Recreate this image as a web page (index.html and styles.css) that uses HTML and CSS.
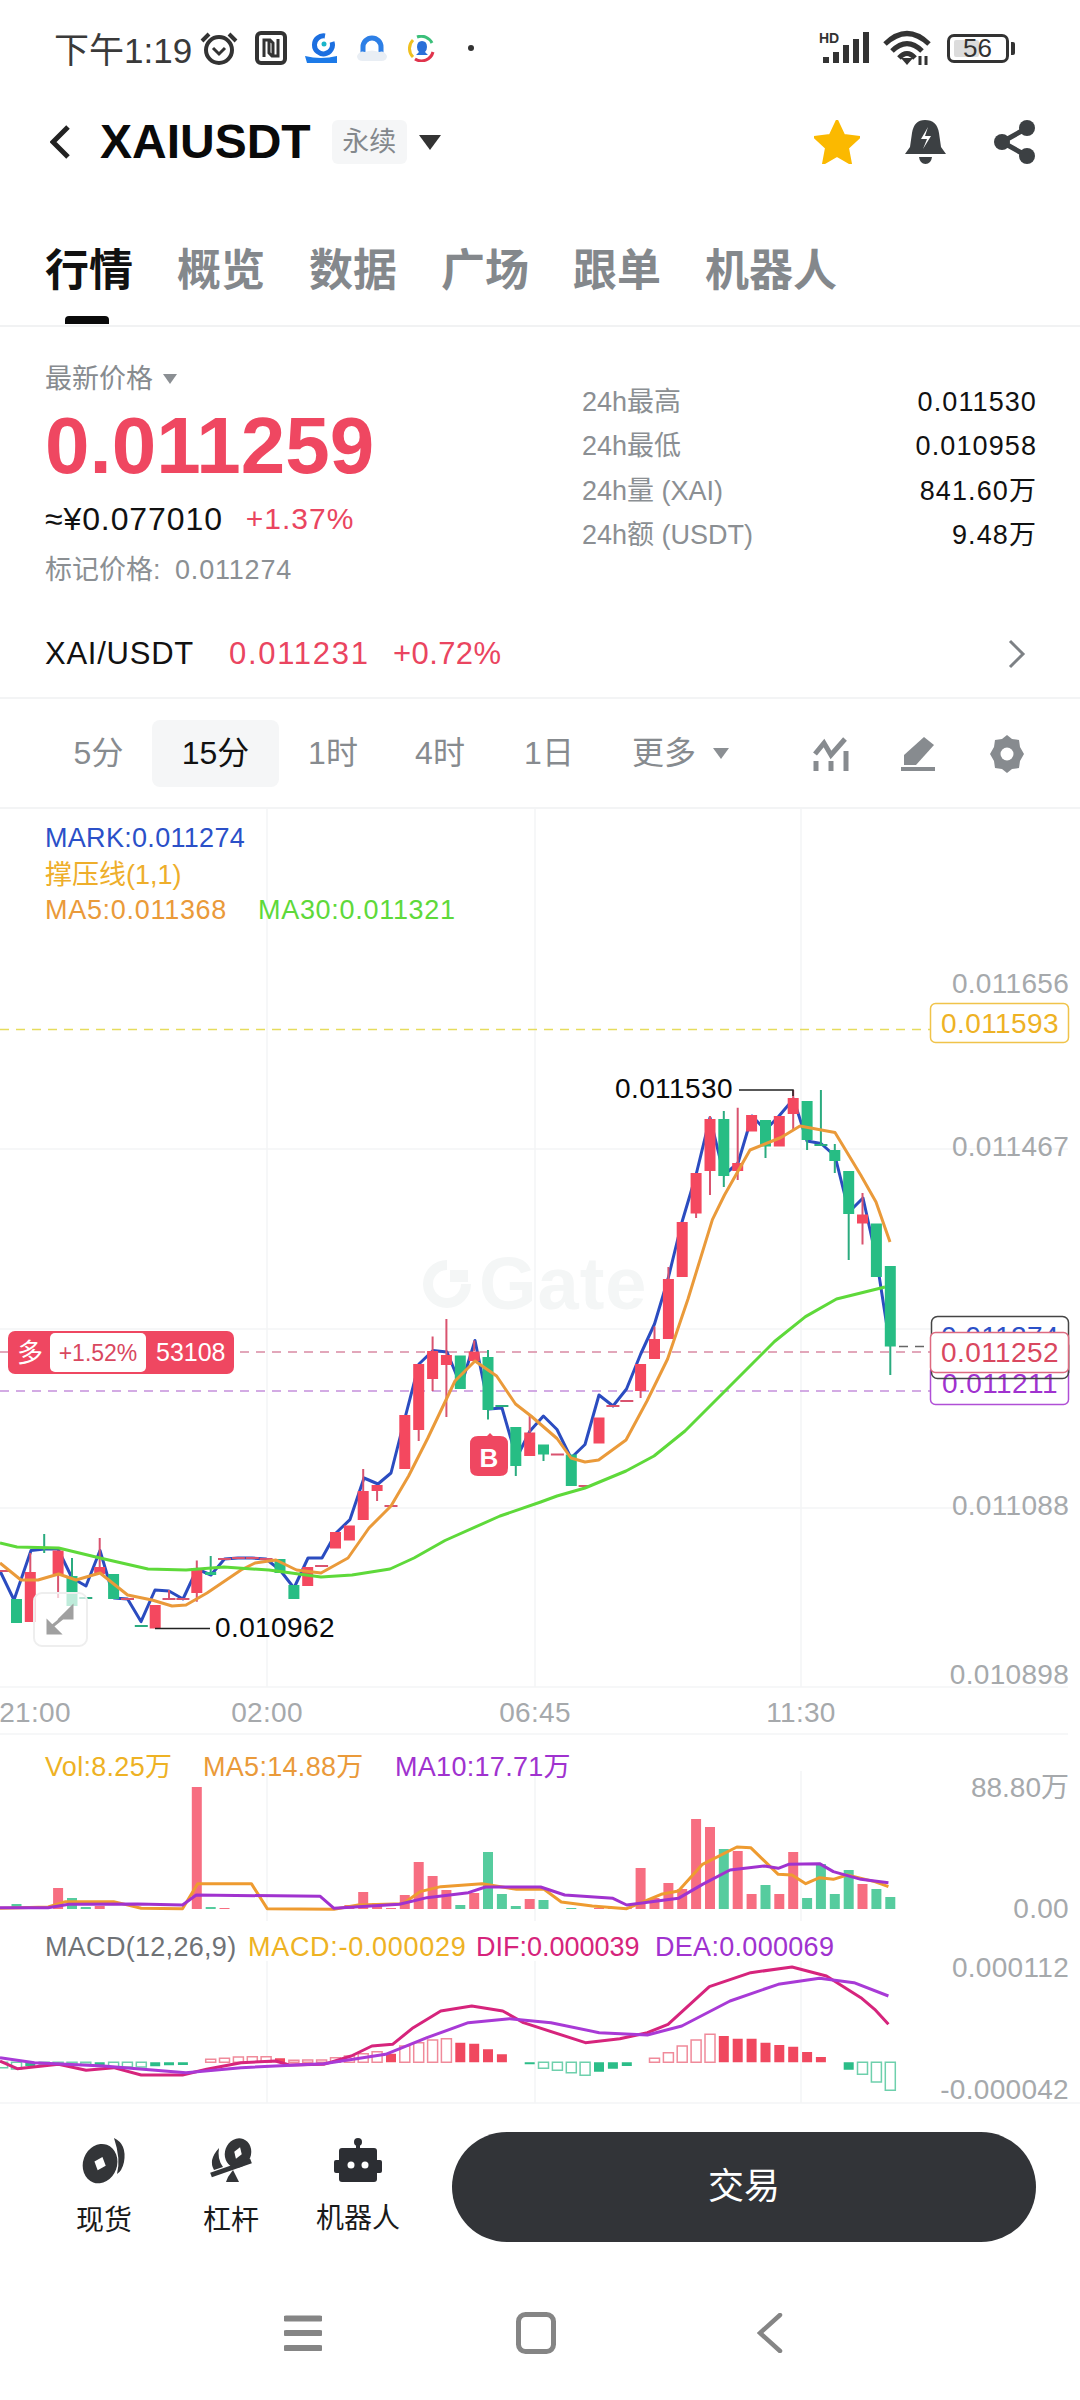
FILE: index.html
```html
<!DOCTYPE html>
<html lang="zh">
<head>
<meta charset="utf-8">
<title>XAIUSDT</title>
<link rel="stylesheet" href="styles.css">
</head>
<body>
<div class="page">
  <div class="status">
    <span class="time">下午1:19</span>
    <svg class="st-ic" viewBox="0 0 38 34" width="38" height="34"><circle cx="19" cy="19" r="13" class="ln4"/><path d="M2 10 9 3M36 10 29 3" class="ln4"/><path d="M13 17l6 6 6-6" class="ln3"/></svg>
    <svg class="st-ic nfc" viewBox="0 0 32 34" width="32" height="34"><rect x="2" y="2" width="28" height="30" rx="4" class="ln4"/><path d="M9 26V9h6l3 3v12M23 8v17h-6l-3-3V10" class="ln3"/></svg>
    <svg class="st-ic app1" viewBox="0 0 34 31" width="34" height="31"><path d="M21 3a9 9 0 1 0 7 6" fill="none" stroke="#1c6fe0" stroke-width="5"/><circle cx="20" cy="11" r="2.500" fill="#19b5c9"/><path d="M1 23q16 4 32 0v7H3z" fill="#1c7ae8"/></svg>
    <svg class="st-ic app2" viewBox="0 0 32 28" width="32" height="28"><path d="M7 19V13a9 9 0 0 1 18 0v6" fill="none" stroke="#2d7fe6" stroke-width="5"/><path d="M1 22q3-6 8-4 7-3 14 0 5-2 8 4 0 5-6 5H7q-6 0-6-5z" fill="#e9eef4"/></svg>
    <svg class="st-ic app3" viewBox="0 0 28 27" width="28" height="27"><path d="M5 22A12 12 0 0 1 5 5" fill="none" stroke="#f0c020" stroke-width="3"/><path d="M9 2a12 12 0 0 1 15 6" fill="none" stroke="#3bbf7a" stroke-width="3"/><path d="M25 17a12 12 0 0 1-18 7" fill="none" stroke="#e0344c" stroke-width="3"/><path d="M14 6q5 0 5 6 0 3-2 5l3 3H8l3-3q-2-2-2-5 0-6 5-6z" fill="#2a6fd8"/></svg>
    <span class="st-dot"></span>
    <span class="st-right">
      <svg viewBox="0 0 54 34" width="54" height="34"><text x="0" y="12" class="hd">HD</text><path d="M7 32v-6M17 32V21M27 32V14M37 32V8M47 32V1" class="sig"/></svg>
      <svg class="wifi" viewBox="0 0 48 36" width="48" height="36"><path d="M2 14Q24-7 46 14M9 21Q24 6 39 21M16 28Q24 19 32 28" class="wf"/><path d="M18 28h12l-6 7z" fill="#333"/><path d="M37 26v9M43 26v9" stroke="#333" stroke-width="3"/></svg>
      <span class="batt"><span class="batt-fill"></span><span class="batt-num">56</span></span><span class="batt-tip"></span>
    </span>
  </div>

  <div class="header">
    <svg class="back" viewBox="0 0 21 34" width="21" height="34"><path d="M18 2 3 17l15 15" fill="none" stroke="#222" stroke-width="5"/></svg>
    <span class="sym">XAIUSDT</span>
    <span class="badge">永续</span>
    <span class="caret"></span>
    <span class="hd-icons">
      <svg viewBox="0 0 46 44" width="46" height="44"><path d="M23 0l7 15 16 2-12 11 3 16-14-8-14 8 3-16L0 17l16-2z" fill="#fbb900" stroke="#fbb900" stroke-linejoin="round" stroke-width="2"/></svg>
      <svg viewBox="0 0 41 44" width="41" height="44"><path d="M20 0q12 0 14 13l2 14 5 7H0l5-7 2-14Q9 0 20 0z" fill="#3c4043"/><path d="M14 37h13q-1 7-6.500 7T14 37z" fill="#3c4043"/><path d="M23 7l-7 12h6l-4 10 8-13h-6z" fill="#fff"/></svg>
      <svg viewBox="0 0 41 44" width="41" height="44"><path d="M33 8 8 22l25 14" fill="none" stroke="#3c4043" stroke-width="5"/><circle cx="33" cy="8" r="8" fill="#3c4043"/><circle cx="8" cy="22" r="8" fill="#3c4043"/><circle cx="33" cy="36" r="8" fill="#3c4043"/></svg>
    </span>
  </div>

  <div class="tabs">
    <span class="tab on">行情</span><span class="tab">概览</span><span class="tab">数据</span><span class="tab">广场</span><span class="tab">跟单</span><span class="tab">机器人</span>
  </div>

  <div class="price">
    <div class="p-left">
      <div class="p-label">最新价格<span class="mini-caret"></span></div>
      <div class="p-big">0.011259</div>
      <div class="p-cny"><span class="cny">≈¥0.077010</span><span class="red chg">+1.37%</span></div>
      <div class="p-mark">标记价格: <span class="num">0.011274</span></div>
    </div>
    <div class="p-right">
      <div class="kv"><span>24h最高</span><b>0.011530</b></div>
      <div class="kv"><span>24h最低</span><b>0.010958</b></div>
      <div class="kv"><span>24h量 (XAI)</span><b>841.60万</b></div>
      <div class="kv"><span>24h额 (USDT)</span><b>9.48万</b></div>
    </div>
  </div>

  <div class="spot">
    <span class="spot-name">XAI/USDT</span><span class="red spot-p">0.011231</span><span class="red spot-c">+0.72%</span>
    <svg class="spot-go" viewBox="0 0 18 30" width="18" height="30"><path d="M2 2l13 13L2 28" fill="none" stroke="#7d8185" stroke-width="3"/></svg>
  </div>

  <div class="frames">
    <span class="fr">5分</span><span class="fr sel">15分</span><span class="fr">1时</span><span class="fr">4时</span><span class="fr fr-day">1日</span>
    <span class="fr more">更多<span class="mini-caret big"></span></span>
    <span class="fr-icons">
      <svg viewBox="0 0 36 34" width="36" height="34"><path d="M2 17 11 6l7 12L32 2" fill="none" stroke="#878b8f" stroke-width="5"/><path d="M3 24v10M18 24v10M33 14v20" stroke="#878b8f" stroke-width="5"/></svg>
      <svg viewBox="0 0 36 34" width="36" height="34"><path d="M23 0l10 8L15 28H3l0-10z" fill="#878b8f"/><path d="M0 30h34v4H0z" fill="#878b8f"/></svg>
      <svg viewBox="0 0 36 38" width="36" height="38"><path d="M18 0l5 4 7 1 1 7 4 7-4 7-1 7-7 1-5 4-5-4-7-1-1-7-4-7 4-7 1-7 7-1z" fill="#878b8f"/><circle cx="18" cy="19" r="6.500" fill="#fff"/></svg>
    </span>
  </div>

  <svg class="chart" viewBox="0 808 1080 1296" width="1080" height="1296">
    <path class="grid" d="M267 808V1686M535 808V1686M801 808V1686M0 1148H1068M0 1328H1068M0 1507H1068M0 1686H1068M0 1733H1068M267 1770V1920M535 1770V1920M801 1770V1920M267 1960V2102M535 1960V2102M801 1960V2102M0 2102H1080"/>

    <text class="sv gate" x="479" y="1308">Gate</text>
    <path class="gate-logo" d="M447 1259a24 24 0 1 0 24 24h-10a14 14 0 1 1-14-14zM450 1269h18v12h-18z"/>

    <path class="d-yel" d="M0 1028.500H930"/>
    <path class="d-pink" d="M0 1351H930"/>
    <path class="d-pur" d="M0 1390H930"/>
    <path class="d-gry" d="M899 1345.500H930"/>

    <polyline class="l-mark" points="0,1570 14,1599 31,1549.500 44.500,1548 58,1548 72,1577 86,1585 100,1549.500 114,1597 127.600,1598 141,1620.600 155,1589 169,1590 183,1598 197,1568 211,1574 224.500,1558 238,1557 252,1557 266,1558 280,1569 294,1587 308,1557 322,1557 336,1532 350,1518.600 364,1477 378,1483 391,1472 405.500,1415 419,1363 433,1349.500 447,1351 461,1385 475,1339.500 489,1408 502,1407 516.500,1457 530,1430 543.400,1415 557,1428.500 571,1457 585,1443.500 599,1394 613,1405 626.500,1388 640.700,1353 654.500,1323 668,1278 682,1221 696,1174 710,1116.600 724,1174 738,1162 752,1115 765.500,1129 779,1115 793.500,1098 807,1140 821,1142.500 835,1155 849,1211 863,1197 876.500,1258 890,1345"/>

    <path class="wick up" d="M30.300 1552V1571M58.100 1573V1597M99.700 1537V1566M127.400 1598V1599M169 1589V1598M196.800 1559.500V1600.700M363.200 1468V1490M377.100 1490V1500M418.700 1429V1440M432.600 1335.500V1390M446.400 1318V1416M474.200 1339.500V1350M529.700 1413V1431M640.600 1390V1397M654.500 1325.600V1338M668.400 1266V1278M696.100 1212V1217M710 1115V1194M737.700 1106.700V1179M793.200 1089V1129M862.500 1192V1243.500"/>
    <path class="wick dn" d="M44.200 1533V1552M72 1557V1575M210.700 1555V1574M488 1349V1418.600M515.800 1465V1475M543.500 1453V1460M723.800 1110V1186M765.500 1145V1157M807.100 1139V1149M820.900 1089V1144M834.800 1143V1172M848.700 1213V1259M890.300 1345V1374"/>
    <path class="doji up" d="M-4 1570H9M120.900 1598H134M162.500 1598H175.500M176.400 1598H189.400M218 1558H231M231.900 1557H244.900M245.800 1557H258.800M259.600 1558H272.600M315.100 1565H328.100M384.500 1505H397.500M550.900 1453.500H563.900M578.600 1485H591.600M606.400 1405H619.400M620.300 1400H633.300"/>
    <path class="doji dn" d="M79.300 1597H92.300M134.800 1625H147.800M495.400 1405H508.400M814.400 1144H827.400"/>
    <path class="body up" d="M30.300 1571V1621M58.100 1549.500V1573M99.700 1566V1573M155.200 1604V1627.500M196.800 1567V1592M307.700 1566V1585M335.500 1531V1547.500M349.400 1524.600V1539.500M363.200 1490V1519M377.100 1484V1490M404.800 1414V1468M418.700 1363V1429M432.600 1350V1378M446.400 1354V1364M474.200 1350.500V1360M529.700 1431.500V1455M599 1416.600V1442.500M640.600 1363V1390M654.500 1338V1358M668.400 1278V1338M682.200 1221V1276M696.100 1172V1212.600M710 1118V1170M737.700 1162V1170M751.600 1114V1130.500M779.300 1115V1145.500M793.200 1097V1113M862.500 1213.600V1222.600"/>
    <path class="body dn" d="M16.500 1598V1622M72 1575V1605M113.600 1573V1598M210.700 1571V1574M280 1558V1572M293.900 1584V1598M460.300 1354.500V1388M488 1356V1409M515.800 1426V1465M543.500 1443.500V1453.500M571.300 1453.500V1485M723.800 1118V1175M765.500 1119V1145.500M807.100 1100V1139M834.800 1149V1160M848.700 1170V1213M876.400 1222.600V1276M890.300 1265V1345.500"/>

    <polyline class="l-ma5" points="0,1562 21,1579 38,1579 58.600,1573 76,1579 100,1572 127.600,1594 152,1599 172,1605 186,1604 207,1592 241,1569 255,1562 276,1559 296.500,1569 321,1572 348,1557 369,1527 391,1505 408.600,1475 427.600,1437.500 455,1380 475,1360 496.600,1375 515.500,1403 531,1415 557,1437.500 571,1457 585,1461 598.600,1459 626,1439 647,1400 667.600,1358 688,1298 712.400,1218.600 724.500,1194 750,1149 781,1136.500 800,1125 816,1128 835,1131.500 860.700,1174 876,1201 890,1241"/>
    <polyline class="l-ma30" points="0,1542 17,1546 58.600,1547 100,1557 148,1568 186,1569 224,1566 269,1569 321,1576 352,1574 390,1568 414,1557 445,1539.500 500,1515 540.700,1501 557,1495 585,1487 626,1470 654,1455 685,1430 712,1403 747,1368 774.500,1340.500 805.500,1315.600 836.500,1298 885,1286"/>

    <g class="sv">
      <text class="t27 ls3 c-mark" x="45" y="846">MARK:0.011274</text>
      <text class="t27 c-yel" x="45" y="883">撑压线(1,1)</text>
      <text class="t27 ls7 c-ma5" x="45" y="918">MA5:0.011368</text>
      <text class="t27 ls7 c-ma30" x="258" y="918">MA30:0.011321</text>

      <text class="axis end" x="1069" y="992">0.011656</text>
      <text class="axis end" x="1069" y="1155">0.011467</text>
      <text class="axis end" x="1069" y="1514">0.011088</text>
      <text class="axis end" x="1069" y="1683">0.010898</text>
      <text class="axis mid" x="35" y="1721">21:00</text>
      <text class="axis mid" x="267" y="1721">02:00</text>
      <text class="axis mid" x="535" y="1721">06:45</text>
      <text class="axis mid" x="801" y="1721">11:30</text>

      <path class="hi" d="M739 1089H793V1095M155 1627.500H210"/>
      <text class="t28 c-ink" x="615" y="1097">0.011530</text>
      <text class="t28 c-ink" x="215" y="1636">0.010962</text>

      <rect class="tag b-yel" x="930.500" y="1002.500" width="138" height="39" rx="5"/>
      <text class="t28 c-yel2 mid" x="1000" y="1032">0.011593</text>
      <rect class="tag b-blk" x="931.500" y="1315.500" width="137" height="62" rx="6"/>
      <text class="t28 c-mark mid" x="1000" y="1345">0.011274</text>
      <rect class="tag b-pur" x="930.500" y="1364.500" width="138" height="39" rx="5"/>
      <text class="t28 c-pur mid" x="1000" y="1392">0.011211</text>
      <rect class="tag b-blkline" x="931.500" y="1338.500" width="137" height="39" rx="6"/>
      <rect class="tag b-red" x="930.500" y="1331.500" width="138" height="40" rx="5"/>
      <text class="t28 c-red mid" x="1000" y="1361">0.011252</text>

      <rect class="fill-red" x="8" y="1330" width="226" height="43" rx="7"/>
      <rect class="fill-w" x="50" y="1332" width="96" height="39" rx="5"/>
      <text class="t26 c-w mid" x="30" y="1361">多</text>
      <text class="t23 c-red mid" x="98" y="1360">+1.52%</text>
      <text class="t25 c-w" x="156" y="1360">53108</text>

      <path class="fill-red" d="M478 1435h9l3-3 3 3h7q8 0 8 8v24q0 8-8 8h-22q-8 0-8-8v-24q0-8 8-8z"/>
      <text class="t26b c-w mid" x="489" y="1466">B</text>
    </g>

    <rect class="exp" x="34" y="1592" width="53" height="53" rx="8"/>
    <path class="exp-ic" d="M50 1627l20-16M48 1621v11h11zM72 1606v11H61z"/>

    <path class="vbar vu" d="M58.100 1908V1887M85.800 1908V1907M99.700 1908V1905M196.800 1908V1786M224.500 1908V1907M349.400 1908V1904M363.200 1908V1891M377.100 1908V1902M391 1908V1907M404.800 1908V1894M418.700 1908V1861M432.600 1908V1875M446.400 1908V1889M474.200 1908V1892M529.700 1908V1898M599 1908V1907M612.900 1908V1907M626.800 1908V1907M640.600 1908V1867M654.500 1908V1897M668.400 1908V1882M682.200 1908V1888M696.100 1908V1818M710 1908V1826M737.700 1908V1850M751.600 1908V1893M779.300 1908V1893M793.200 1908V1851M862.500 1908V1883"/>
    <path class="vbar vd" d="M16.500 1908V1903M72 1908V1897M85.800 1908V1906M210.700 1908V1906M460.300 1908V1904M488 1908V1851M501.900 1908V1893M515.800 1908V1905M543.500 1908V1899M571.300 1908V1907M723.800 1908V1848M765.500 1908V1884M807.100 1908V1897M820.900 1908V1863M834.800 1908V1893M848.700 1908V1869M876.400 1908V1888M890.300 1908V1896"/>
    <g transform="translate(0 1720) scale(.6887 .33333)">
      <polyline class="s-ma5" points="0,562 70,558 95,542 165,542 205,562 265,563 287,488 365,488 388,563 485,565 520,552 585,548 610,512 640,497 700,488 750,505 790,505 815,543 860,555 910,563 960,520 985,510 1020,430 1070,378 1090,380 1130,460 1150,462 1170,488 1190,470 1210,475 1230,462 1270,482 1290,497"/>
      <polyline class="s-ma10" points="0,560 70,560 100,550 200,549 265,552 285,522 465,526 485,562 580,550 620,530 680,515 705,498 785,498 820,522 890,532 910,552 985,532 1020,490 1060,447 1110,435 1130,442 1145,430 1190,428 1210,452 1250,475 1290,485"/>
    </g>

    <path class="hist-s up" d="M280 2061.300V2057.300M391 2061.300V2052.700M460.300 2061.300V2041.700M474.200 2061.300V2042.700M488 2061.300V2048.300M501.900 2061.300V2053.300M723.800 2061.300V2035M737.700 2061.300V2037.700M751.600 2061.300V2037.700M765.500 2061.300V2041.700M779.300 2061.300V2044M793.200 2061.300V2045.700M807.100 2061.300V2051M820.900 2061.300V2056"/>
    <path class="hist-s dn" d="M30.300 2061.300V2065M99.700 2061.300V2064M155.200 2061.300V2065.300M169 2061.300V2064.300M182.900 2061.300V2064M529.700 2061.300V2063.300M599 2061.300V2070.700M612.900 2061.300V2067.700M626.800 2061.300V2065M848.700 2061.300V2068.700"/>
    <path class="hist-h up" d="M205.700 2058.300h10v3h-10zM219.500 2057.300h10v4h-10zM233.400 2056h10v5.300h-10zM247.300 2055.700h10v5.600h-10zM261.100 2055.700h10v5.600h-10zM288.900 2059.300h10v2h-10zM302.700 2059h10v2.300h-10zM316.600 2059h10v2.300h-10zM330.500 2056.700h10v4.600h-10zM344.400 2055h10v6.300h-10zM358.200 2052.700h10v8.600h-10zM372.100 2050.700h10v10.600h-10zM399.800 2045h10v16.300h-10zM413.700 2041.700h10v19.600h-10zM427.600 2039h10v22.300h-10zM441.400 2037.700h10v23.600h-10zM649.500 2057.300h10v4h-10zM663.400 2051.700h10v9.600h-10zM677.200 2045h10v16.300h-10zM691.100 2039h10v22.300h-10zM705 2033.300h10v28h-10z"/>
    <path class="hist-h dn" d="M-2.400 2061.300h10v5.400h-10zM11.500 2061.300h10v6.700h-10zM39.200 2061.300h10v2h-10zM53.100 2061.300h10v2h-10zM67 2061.300h10v2h-10zM80.800 2061.300h10v2h-10zM108.600 2061.300h10v4.700h-10zM122.400 2061.300h10v4.700h-10zM136.300 2061.300h10v4.700h-10zM538.500 2061.300h10v6h-10zM552.400 2061.300h10v8h-10zM566.300 2061.300h10v10.400h-10zM580.100 2061.300h10v13h-10zM857.500 2061.300h10v12h-10zM871.400 2061.300h10v19.700h-10zM885.300 2061.300h10v28h-10z"/>
    <g transform="translate(0 1720) scale(.6887 .33333)">
      <polyline class="s-dif" points="0,1020 25,1043 85,1030 125,1048 165,1040 205,1062 265,1062 300,1045 350,1025 400,1020 420,1032 470,1030 510,1005 540,975 570,970 600,920 640,870 685,855 730,870 760,905 850,965 900,953 940,935 970,910 1030,797 1090,755 1150,738 1200,765 1250,830 1270,865 1290,910"/>
      <polyline class="s-dea" points="0,1010 50,1025 150,1035 270,1055 350,1040 470,1028 560,1000 620,950 680,905 740,893 800,905 870,935 940,942 990,915 1060,840 1130,790 1190,772 1240,785 1290,825"/>
    </g>

    <g class="sv">
      <text class="t27 ls3 c-yel2" x="45" y="1775">Vol:8.25万</text>
      <text class="t27 ls3 c-ma5" x="203" y="1775">MA5:14.88万</text>
      <text class="t27 ls3 c-pur" x="395" y="1775">MA10:17.71万</text>
      <text class="axis-plain end" x="1069" y="1796">88.80万</text>
      <text class="axis end" x="1069" y="1917">0.00</text>
      <text class="t27 ls3 c-grey" x="45" y="1955">MACD(12,26,9)</text>
      <text class="t27 ls7 c-yel2" x="248" y="1955">MACD:-0.000029</text>
      <text class="t27 c-dif" x="476" y="1955">DIF:0.000039</text>
      <text class="t27 ls3 c-pur" x="655" y="1955">DEA:0.000069</text>
      <text class="axis end" x="1069" y="1976">0.000112</text>
      <text class="axis end" x="1069" y="2098">-0.000042</text>
    </g>
  </svg>

  <div class="bottom">
    <div class="b-item b1">
      <svg viewBox="0 0 46 46" width="46" height="46"><path d="M33 0q13 6 10 24-2 9-7 12 4-15-3-36z" fill="#333538"/><g transform="rotate(20 20 26)"><ellipse cx="19" cy="26" rx="17" ry="20" fill="#333538"/><path d="M19 19l6 7-6 7-6-7z" fill="#fff"/></g></svg>
      <span>现货</span>
    </div>
    <div class="b-item b2">
      <svg viewBox="0 0 46 46" width="46" height="46"><g transform="rotate(20 30 15)"><ellipse cx="30" cy="15" rx="13" ry="15" fill="#333538"/><path d="M30 9l4 6-4 6-4-6z" fill="#fff"/></g><path d="M11 10q-11 12-5 22l9-3q-6-8-4-19z" fill="#333538"/><path d="M3 37l40-14" stroke="#333538" stroke-width="5"/><path d="M20 39l5-7 6 12H18z" fill="#333538"/></svg>
      <span>杠杆</span>
    </div>
    <div class="b-item b3">
      <svg viewBox="0 0 48 44" width="48" height="44"><circle cx="24" cy="4" r="4" fill="#2c2e33"/><path d="M22 4h4v8h-4z" fill="#2c2e33"/><rect x="5" y="10" width="38" height="34" rx="3" fill="#2c2e33"/><rect x="0" y="22" width="48" height="13" rx="2" fill="#2c2e33"/><circle cx="17" cy="27" r="3.500" fill="#fff"/><circle cx="31" cy="27" r="3.500" fill="#fff"/></svg>
      <span>机器人</span>
    </div>
    <div class="trade">交易</div>
  </div>

  <div class="nav">
    <svg viewBox="0 0 38 36" width="38" height="36"><path d="M2 3.500h34M2 18h34M2 33h34" stroke="#858585" stroke-width="6" stroke-linecap="round"/></svg>
    <svg viewBox="0 0 40 42" width="40" height="42"><rect x="2.500" y="2.500" width="35" height="37" rx="7" fill="none" stroke="#858585" stroke-width="5"/></svg>
    <svg class="nav-back" viewBox="0 0 26 40" width="26" height="40"><path d="M23 2 3 20l20 18" fill="none" stroke="#858585" stroke-width="4.500" stroke-linecap="round"/></svg>
  </div>
</div>
</body>
</html>
```
FILE: styles.css
```css
*{box-sizing:border-box}
html,body{margin:0;padding:0;background:#fff}
body{font-family:"Liberation Sans","Noto Sans CJK SC",sans-serif;color:#111}
.page{width:1080px;height:2400px;overflow:hidden;background:#fff}
.red{color:#ea4560}

.status{height:96px;display:flex;align-items:center;padding-left:54px}
.time{font-size:35px;color:#3a3a3a;width:146px;white-space:nowrap;margin-top:-2px}
.st-ic{flex:none}
.st-ic.nfc{margin-left:17px}
.st-ic.app1{margin-left:17px}
.st-ic.app2{margin-left:18px}
.st-ic.app3{margin-left:20px}
.st-dot{width:6px;height:6px;border-radius:50%;background:#333;margin-left:32px}
.st-right{margin-left:auto;display:flex;align-items:center;margin-right:65px;gap:0}
.st-right .wifi{margin-left:10px}
.ln3{fill:none;stroke:#333;stroke-width:3}
.ln4{fill:none;stroke:#333;stroke-width:4}
.hd{font:700 14px "Liberation Sans",sans-serif;fill:#333}
.sig{stroke:#333;stroke-width:6;fill:none}
.wf{fill:none;stroke:#333;stroke-width:5}
.batt{position:relative;width:62px;height:29px;border:3px solid #333;border-radius:7px;margin-left:16px;display:block}
.batt-fill{position:absolute;left:4px;top:3px;bottom:3px;width:25px;background:#dcdcdc;border-radius:2px}
.batt-num{position:absolute;left:13px;top:-3px;font-size:26px;line-height:29px;color:#333}
.batt-tip{width:4px;height:13px;background:#333;border-radius:0 2px 2px 0;margin-left:2px}

.header{height:92px;display:flex;align-items:center;padding-left:50px}
.sym{font-size:48px;font-weight:700;color:#0a0a0a;margin-left:29px;margin-top:-2px}
.badge{width:75px;height:44px;margin-left:21px;background:#f5f6f7;border-radius:6px;color:#84888c;font-size:27px;line-height:44px;text-align:center}
.caret{width:0;height:0;border-left:11px solid transparent;border-right:11px solid transparent;border-top:15px solid #333;margin-left:12px}
.hd-icons{margin-left:auto;display:flex;align-items:center;gap:45px;margin-right:45px}
.hd-icons svg:nth-child(2){margin-right:3px}

.tabs{height:139px;display:flex;gap:44px;padding-left:45px;padding-top:57px;border-bottom:2px solid #f1f2f3}
.tab{font-size:44px;font-weight:700;color:#84888c;line-height:52px;height:52px;position:relative}
.tab.on{color:#111}
.tab.on::after{content:"";position:absolute;left:20px;top:71px;width:44px;height:8px;background:#0a0a0a;border-radius:4px 4px 0 0}

.price{height:283px;display:flex;justify-content:space-between;padding:0 44px 0 45px}
.p-left{padding-top:32px}
.p-label{font-size:27px;line-height:40px;color:#878b8f;display:flex;align-items:center}
.mini-caret{display:inline-block;width:0;height:0;border-left:7px solid transparent;border-right:7px solid transparent;border-top:10px solid #8b8f93;margin-left:10px}
.mini-caret.big{border-left-width:8px;border-right-width:8px;border-top-width:11px;margin-left:17px}
.p-big{font-size:80px;font-weight:700;line-height:90px;color:#ef4761;margin-top:2px}
.p-cny{font-size:30px;line-height:40px;margin-top:8px;display:flex;gap:23px;color:#111}
.cny{font-size:32px;letter-spacing:.9px}
.chg{letter-spacing:1px}
.p-mark{font-size:27px;line-height:40px;color:#8b8f93;margin-top:11px}
.num{letter-spacing:.8px;margin-left:7px}
.p-right{width:454px;padding-top:53px}
.kv{display:flex;justify-content:space-between;font-size:27px;line-height:44.400px;color:#8b8f93}
.kv b{font-weight:400;color:#111;letter-spacing:1.100px;margin-right:-1px}

.spot{height:89px;display:flex;align-items:center;padding:0 54px 0 45px;border-bottom:2px solid #f3f4f5;font-size:31px}
.spot-name{color:#111;width:184px;letter-spacing:.75px}
.spot-p{width:164px;letter-spacing:1.700px}
.spot-c{letter-spacing:.4px}
.spot-go{margin-left:auto}

.frames{height:110px;display:grid;grid-template-columns:107px 127px 108px 106px 108px auto 1fr;align-items:center;padding-left:45px;border-bottom:2px solid #f3f4f5}
.fr{font-size:32px;color:#878b8f;height:67px;line-height:67px;text-align:center;border-radius:8px}
.fr-day{padding-left:4px}
.fr.sel{background:#f5f6f7;color:#111}
.fr.more{margin-left:31px;display:flex;align-items:center}
.fr-icons{display:flex;align-items:center;justify-content:flex-end;gap:52px;padding-right:55px;padding-top:2px}

.chart{display:block}
.sv text{font-family:"Liberation Sans","Noto Sans CJK SC",sans-serif}
.grid{fill:none;stroke:#f4f5f6;stroke-width:1.500}
.gate{font-family:"Liberation Sans",sans-serif;font-size:74px;font-weight:700;fill:#f4f6f6;letter-spacing:1px}
.gate-logo{fill:#f4f6f6}
.d-yel,.d-pink,.d-pur,.d-gry{fill:none;stroke-width:1.500;stroke-dasharray:9 7}
.d-yel{stroke:#e6dc5c}
.d-pink{stroke:#d98aa4}
.d-pur{stroke:#c590dc}
.d-gry{stroke:#666}
.l-mark{fill:none;stroke:#2b4cc0;stroke-width:3;stroke-linejoin:round}
.l-ma5{fill:none;stroke:#ea9a3a;stroke-width:3;stroke-linejoin:round}
.l-ma30{fill:none;stroke:#5ed93a;stroke-width:3;stroke-linejoin:round}
.wick,.doji,.body{fill:none}
.wick{stroke-width:2}
.doji{stroke-width:2}
.body{stroke-width:11}
.up.wick,.up.doji{stroke:#d9536f}
.dn.wick,.dn.doji{stroke:#2bab7f}
.up.body{stroke:#f4485f}
.dn.body{stroke:#27bd84}

.t27{font-size:27px}
.t28{font-size:28px;letter-spacing:.4px}
.t26{font-size:26px}
.t25{font-size:25px}
.t23{font-size:23px}
.t26b{font-size:26px;font-weight:700}
.ls3{letter-spacing:.3px}
.ls7{letter-spacing:.7px}
.axis{font-size:28px;fill:#a6a9ac;letter-spacing:.3px}
.axis-plain{font-size:28px;fill:#a6a9ac}
.end{text-anchor:end}
.mid{text-anchor:middle}
.c-mark{fill:#2b50c8}
.c-yel{fill:#eeae2b}
.c-yel2{fill:#eeb224}
.c-ma5{fill:#ea9a3a}
.c-ma30{fill:#5ed93a}
.c-ink{fill:#0a0a0a}
.c-red{fill:#d9485f}
.c-pur{fill:#a032cf}
.c-w{fill:#fff}
.c-grey{fill:#6f7276}
.c-dif{fill:#d6247c}
.hi{fill:none;stroke:#222;stroke-width:1.500}
.tag{fill:#fff;stroke-width:1.500}
.b-yel{stroke:#f0c34a}
.b-blk{stroke:#444}
.b-pur{stroke:#b04fd6}
.b-blkline{stroke:#444;fill:none}
.b-red{stroke:#de6a80}
.fill-red{fill:#ef4761}
.fill-w{fill:#fff}
.exp{fill:#fff;fill-opacity:.7;stroke:#eeeeee;stroke-width:2}
.exp-ic{fill:#a0a0a0;stroke:#a0a0a0;stroke-width:3}

.vbar{fill:none;stroke-width:10}
.vu{stroke:#f76e81}
.vd{stroke:#56cc9e}
.s-ma5,.s-ma10,.s-dif,.s-dea{fill:none;stroke-width:3;vector-effect:non-scaling-stroke;stroke-linejoin:round}
.s-ma5{stroke:#ee9b30}
.s-ma10{stroke:#a032cf}
.s-dif{stroke:#d6247c}
.s-dea{stroke:#a83ad6}
.hist-s{fill:none;stroke-width:10}
.hist-s.up{stroke:#f0485f}
.hist-s.dn{stroke:#2bbd88}
.hist-h{fill:#fff;stroke-width:1.500}
.hist-h.up{stroke:#f08a9a}
.hist-h.dn{stroke:#6ed0ac}

.bottom{height:196px;position:relative;display:flex;padding-top:33px}
.b-item{display:flex;flex-direction:column;align-items:center;gap:20px;font-size:28px;color:#1a1a1a;width:84px;line-height:34px}
.b-item svg{display:block}
.b1{margin-left:62px}
.b2{margin-left:43px}
.b3{margin-left:43px}
.trade{position:absolute;left:452px;top:27px;width:584px;height:110px;border-radius:55px;background:#323438;color:#fff;font-size:36px;line-height:110px;text-align:center}

.nav{display:flex;align-items:center;height:64px;padding-left:284px;gap:194px}
.nav-back{margin-left:7px}
```
